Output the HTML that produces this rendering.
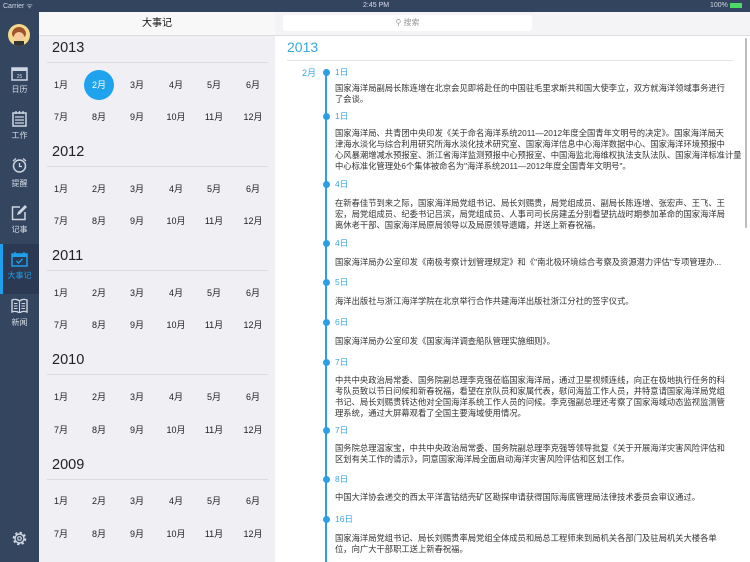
<!DOCTYPE html>
<html><head><meta charset="utf-8"><style>
*{margin:0;padding:0;box-sizing:border-box}
body{width:750px;height:562px;overflow:hidden;position:relative;background:#fff;font-family:"Liberation Sans","Noto Sans CJK SC",sans-serif;}
.a{position:absolute;white-space:nowrap}
#sb{left:0;top:0;width:750px;height:12px;background:#33445f;color:#cfd6e2;font-size:7px}
#side{left:0;top:12px;width:39px;height:550px;background:#34455f}
.lab{position:absolute;width:39px;text-align:center;font-size:8px;color:#d6dce6}
#lp{left:39px;top:12px;width:236px;height:550px;background:#efeff4}
#lh{left:39px;top:12px;width:236px;height:24px;background:#f8f8f9;border-bottom:1px solid #dcdce0;text-align:center;line-height:24px;font-size:10px;color:#111}
#rh{left:275px;top:12px;width:475px;height:24px;background:#f4f4f6;border-bottom:1px solid #dcdce0}
.yr{position:absolute;left:52px;font-size:14.5px;color:#222}
.hl{position:absolute;left:47px;width:221px;height:1px;background:#dcdce0}
.m{position:absolute;width:34px;margin-left:-17px;text-align:center;font-size:9px;color:#222;line-height:12px}
.d{position:absolute;left:335px;font-size:8.5px;color:#3aa6e3;line-height:12px}
.t{position:absolute;left:335px;font-size:8.3px;color:#333;line-height:11px;white-space:nowrap}
.dot{position:absolute;left:323px;width:7px;height:7px;border-radius:50%;background:#2b9ee6}
</style></head><body>
<div id="sb" class="a"><span style="position:absolute;left:3px;top:2px">Carrier ᯤ</span><span style="position:absolute;left:363px;top:2px;color:#dde">2:45 PM</span><span style="position:absolute;left:710px;top:2px">100% <span style="display:inline-block;width:12px;height:5px;background:#4cd964;vertical-align:middle"></span></span></div>
<div id="side" class="a">
 <div style="position:absolute;left:8px;top:12px;width:22px;height:22px;border-radius:50%;background:#f3d98a;overflow:hidden"><div style="position:absolute;left:4px;top:3px;width:14px;height:10px;border-radius:7px 7px 3px 3px;background:#a0522d"></div><div style="position:absolute;left:6px;top:8px;width:10px;height:9px;border-radius:50%;background:#f6c9a0"></div><div style="position:absolute;left:6px;top:17px;width:10px;height:6px;background:#333"></div></div>
 <svg style="position:absolute;left:11px;top:54px" width="17" height="15" viewBox="0 0 17 15"><rect x="1" y="2" width="15" height="12" fill="none" stroke="#cfd6e2" stroke-width="1.5"/><rect x="1" y="2" width="15" height="3" fill="#cfd6e2"/><text x="8.5" y="12" font-size="5" text-anchor="middle" fill="#cfd6e2" font-family="Liberation Sans">25</text></svg>
 <div class="lab" style="top:72px">日历</div>
 <svg style="position:absolute;left:12px;top:99px" width="15" height="16" viewBox="0 0 15 16"><rect x="1" y="2" width="13" height="13" fill="none" stroke="#cfd6e2" stroke-width="1.5"/><path d="M3 6h9M3 9h9M3 12h9M4 0v3M7.5 0v3M11 0v3" stroke="#cfd6e2" stroke-width="1.3"/></svg>
 <div class="lab" style="top:118px">工作</div>
 <svg style="position:absolute;left:11px;top:145px" width="17" height="17" viewBox="0 0 17 17"><circle cx="8.5" cy="9" r="6" fill="none" stroke="#cfd6e2" stroke-width="1.5"/><path d="M8.5 6v3.5h2.5M2 4l3-2.5M15 4l-3-2.5" stroke="#cfd6e2" stroke-width="1.3" fill="none"/></svg>
 <div class="lab" style="top:166px">提醒</div>
 <svg style="position:absolute;left:11px;top:193px" width="17" height="16" viewBox="0 0 17 16"><path d="M9 2H1.5v12.5H14V7" fill="none" stroke="#cfd6e2" stroke-width="1.5"/><path d="M6 10l1-3 7-7 2 2-7 7z" fill="#cfd6e2"/></svg>
 <div class="lab" style="top:212px">记事</div>
 <div style="position:absolute;left:0;top:232px;width:39px;height:50px;background:#2b3a52"></div>
 <div style="position:absolute;left:0;top:232px;width:3px;height:50px;background:#1ea0ef"></div>
 <svg style="position:absolute;left:11px;top:239px" width="17" height="16" viewBox="0 0 17 16"><rect x="1" y="3" width="15" height="12" fill="none" stroke="#1ea0ef" stroke-width="1.5"/><rect x="1" y="3" width="15" height="3" fill="#1ea0ef"/><path d="M4 1v3M13 1v3" stroke="#1ea0ef" stroke-width="1.4"/><path d="M5.5 10l2 2 4-4" stroke="#1ea0ef" stroke-width="1.4" fill="none"/></svg>
 <div class="lab" style="top:258px;color:#1ea0ef">大事记</div>
 <svg style="position:absolute;left:11px;top:286px" width="17" height="15" viewBox="0 0 17 15"><path d="M1 2c3-1 5-1 7.5 1 2.5-2 4.5-2 7.5-1v12c-3-1-5-1-7.5 1-2.5-2-4.5-2-7.5-1z" fill="none" stroke="#cfd6e2" stroke-width="1.4"/><path d="M8.5 3v12M3 5.5h3.5M3 8h3.5M3 10.5h3.5M10.5 5.5h3.5M10.5 8h3.5M10.5 10.5h3.5" stroke="#cfd6e2" stroke-width="1"/></svg>
 <div class="lab" style="top:305px">新闻</div>
 <svg style="position:absolute;left:11px;top:518px" width="17" height="17" viewBox="0 0 17 17"><circle cx="8.5" cy="8.5" r="5.5" fill="none" stroke="#cfd6e2" stroke-width="2.6" stroke-dasharray="2.2 2.1"/><circle cx="8.5" cy="8.5" r="4.5" fill="none" stroke="#cfd6e2" stroke-width="1.4"/><circle cx="8.5" cy="8.5" r="1.8" fill="none" stroke="#cfd6e2" stroke-width="1.2"/></svg>
</div>
<div id="lp" class="a"></div>
<div id="lh" class="a">大事记</div>
<div id="rh" class="a"><div style="position:absolute;left:8px;top:3px;width:249px;height:16px;background:#fff;border-radius:3px;text-align:center;font-size:8px;line-height:16px;color:#999">⚲ 搜索</div></div>

<div class="yr" style="top:40px">2013</div><div class="hl" style="top:62px"></div>
<div class="yr" style="top:144px">2012</div><div class="hl" style="top:166px"></div>
<div class="yr" style="top:248px">2011</div><div class="hl" style="top:270px"></div>
<div class="yr" style="top:352px">2010</div><div class="hl" style="top:374px"></div>
<div class="yr" style="top:457px">2009</div><div class="hl" style="top:479px"></div>
<div style="position:absolute;left:84px;top:70px;width:30px;height:30px;border-radius:50%;background:#20a3ef"></div>
<div id="months"></div>
<script>
var xs=[61,99,137,176,214,253],rows=[85,117,189,221,293,325,397,430,501,534],h='';
rows.forEach(function(y,ri){for(var i=0;i<6;i++){var n=(ri%2?7:1)+i;var c=(ri==0&&i==1)?'color:#fff;':'';h+='<div class="m" style="left:'+xs[i]+'px;top:'+(y-6)+'px;'+c+'">'+n+'月</div>';}});
document.getElementById('months').innerHTML=h;
</script>

<div class="a" style="left:287px;top:39px;font-size:14px;color:#35a8e0">2013</div>
<div class="a" style="left:287px;top:60px;width:446px;height:1px;background:#e2e2e6"></div>
<div class="a" style="left:745px;top:38px;width:2px;height:190px;background:#bbb;border-radius:1px"></div>
<div class="a" style="left:325px;top:72px;width:2px;height:490px;background:#2b9ee6"></div>
<div class="a" style="left:302px;top:66px;font-size:9px;color:#3aa6e3">2月</div>

<div class="dot" style="top:69px"></div><div class="d" style="top:66px">1日</div>
<div class="t" style="top:83px">国家海洋局副局长陈连增在北京会见即将赴任的中国驻毛里求斯共和国大使李立，双方就海洋领域事务进行<br>了会谈。</div>
<div class="dot" style="top:113px"></div><div class="d" style="top:110px">1日</div>
<div class="t" style="top:128px">国家海洋局、共青团中央印发《关于命名海洋系统2011—2012年度全国青年文明号的决定》。国家海洋局天<br>津海水淡化与综合利用研究所海水淡化技术研究室、国家海洋信息中心海洋数据中心、国家海洋环境预报中<br>心风暴潮增减水预报室、浙江省海洋监测预报中心预报室、中国海监北海维权执法支队法队、国家海洋标准计量<br>中心标准化管理处6个集体被命名为"海洋系统2011—2012年度全国青年文明号"。</div>
<div class="dot" style="top:181px"></div><div class="d" style="top:178px">4日</div>
<div class="t" style="top:198px">在新春佳节到来之际，国家海洋局党组书记、局长刘赐贵，局党组成员、副局长陈连增、张宏声、王飞、王<br>宏，局党组成员、纪委书记吕滨，局党组成员、人事司司长房建孟分别看望抗战时期参加革命的国家海洋局<br>离休老干部、国家海洋局原局领导以及局原领导遗孀，并送上新春祝福。</div>
<div class="dot" style="top:240px"></div><div class="d" style="top:237px">4日</div>
<div class="t" style="top:257px">国家海洋局办公室印发《南极考察计划管理规定》和《"南北极环境综合考察及资源潜力评估"专项管理办...</div>
<div class="dot" style="top:279px"></div><div class="d" style="top:276px">5日</div>
<div class="t" style="top:296px">海洋出版社与浙江海洋学院在北京举行合作共建海洋出版社浙江分社的签字仪式。</div>
<div class="dot" style="top:319px"></div><div class="d" style="top:316px">6日</div>
<div class="t" style="top:336px">国家海洋局办公室印发《国家海洋调查船队管理实施细则》。</div>
<div class="dot" style="top:359px"></div><div class="d" style="top:356px">7日</div>
<div class="t" style="top:375px">中共中央政治局常委、国务院副总理李克强莅临国家海洋局，通过卫星视频连线，向正在极地执行任务的科<br>考队员致以节日问候和新春祝福，看望在京队员和家属代表，慰问海监工作人员，并特意请国家海洋局党组<br>书记、局长刘赐贵转达他对全国海洋系统工作人员的问候。李克强副总理还考察了国家海域动态监视监测管<br>理系统，通过大屏幕观看了全国主要海域使用情况。</div>
<div class="dot" style="top:427px"></div><div class="d" style="top:424px">7日</div>
<div class="t" style="top:443px">国务院总理温家宝，中共中央政治局常委、国务院副总理李克强等领导批复《关于开展海洋灾害风险评估和<br>区划有关工作的请示》，同意国家海洋局全面启动海洋灾害风险评估和区划工作。</div>
<div class="dot" style="top:476px"></div><div class="d" style="top:473px">8日</div>
<div class="t" style="top:492px">中国大洋协会递交的西太平洋富钴结壳矿区勘探申请获得国际海底管理局法律技术委员会审议通过。</div>
<div class="dot" style="top:516px"></div><div class="d" style="top:513px">16日</div>
<div class="t" style="top:533px">国家海洋局党组书记、局长刘赐贵率局党组全体成员和局总工程师来到局机关各部门及驻局机关大楼各单<br>位，向广大干部职工送上新春祝福。</div>
</body></html>
